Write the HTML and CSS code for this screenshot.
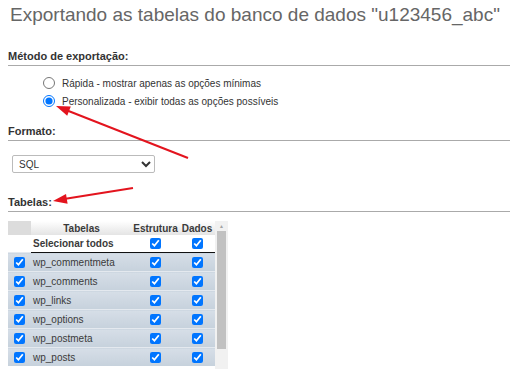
FILE: index.html
```html
<!DOCTYPE html>
<html lang="pt">

<head>
    <meta charset="UTF-8">
    <meta name="viewport" content="width=device-width, initial-scale=1.0">
    <title>Exportar</title>
    <link rel="stylesheet" href="styles.css">
</head>

<body>
    <h2 class="page-title">Exportando as tabelas do banco de dados "u123456_abc"</h2>

    <h3 class="section-title">Método de exportação:</h3>
    <ul class="radio-list">
        <li><input type="radio" name="method" id="quick"><label for="quick">Rápida - mostrar apenas as opções mínimas</label></li>
        <li><input type="radio" name="method" id="custom" checked><label for="custom">Personalizada - exibir todas as opções possíveis</label></li>
    </ul>

    <h3 class="section-title title-format">Formato:</h3>
    <select class="format-select">
        <option>SQL</option>
        <option>CSV</option>
        <option>JSON</option>
    </select>

    <h3 class="section-title title-tables">Tabelas:</h3>
    <div class="tables-box">
        <div class="tables-view">
            <table class="tables">
                <thead>
                    <tr>
                        <th class="col-check"></th>
                        <th class="col-name">Tabelas</th>
                        <th class="col-struct">Estrutura</th>
                        <th class="col-data">Dados</th>
                    </tr>
                </thead>
                <tbody>
                    <tr class="select-all">
                        <td class="col-check"></td>
                        <td>Selecionar todos</td>
                        <td class="center"><input type="checkbox" checked></td>
                        <td class="center"><input type="checkbox" checked></td>
                    </tr>
                    <tr class="marked">
                        <td class="col-check"><input type="checkbox" checked></td>
                        <td>wp_commentmeta</td>
                        <td class="center"><input type="checkbox" checked></td>
                        <td class="center"><input type="checkbox" checked></td>
                    </tr>
                    <tr class="marked">
                        <td class="col-check"><input type="checkbox" checked></td>
                        <td>wp_comments</td>
                        <td class="center"><input type="checkbox" checked></td>
                        <td class="center"><input type="checkbox" checked></td>
                    </tr>
                    <tr class="marked">
                        <td class="col-check"><input type="checkbox" checked></td>
                        <td>wp_links</td>
                        <td class="center"><input type="checkbox" checked></td>
                        <td class="center"><input type="checkbox" checked></td>
                    </tr>
                    <tr class="marked">
                        <td class="col-check"><input type="checkbox" checked></td>
                        <td>wp_options</td>
                        <td class="center"><input type="checkbox" checked></td>
                        <td class="center"><input type="checkbox" checked></td>
                    </tr>
                    <tr class="marked">
                        <td class="col-check"><input type="checkbox" checked></td>
                        <td>wp_postmeta</td>
                        <td class="center"><input type="checkbox" checked></td>
                        <td class="center"><input type="checkbox" checked></td>
                    </tr>
                    <tr class="marked">
                        <td class="col-check"><input type="checkbox" checked></td>
                        <td>wp_posts</td>
                        <td class="center"><input type="checkbox" checked></td>
                        <td class="center"><input type="checkbox" checked></td>
                    </tr>
                </tbody>
            </table>
        </div>
        <div class="scrollbar">
            <span class="scroll-up">&#9650;</span>
            <span class="scroll-thumb"></span>
        </div>
    </div>

    <svg class="arrows" width="516" height="379" viewBox="0 0 516 379">
        <line x1="188" y1="158" x2="66" y2="110" />
        <polygon points="56,106 70.8,106.5 67.2,115.8" />
        <line x1="133" y1="188" x2="64" y2="199" />
        <polygon points="53,201 67.6,203.7 66,193.9" />
    </svg>
</body>

</html>
```

FILE: styles.css
```css
body {
    font-family: "Liberation Sans", Arial, sans-serif;
    font-size: 10px;
    color: #333;
    background-color: #fff;
    margin: 0;
    padding: 0 6px 0 8px;
    position: relative;
}

.page-title {
    font-size: 19px;
    font-weight: normal;
    color: #666;
    margin: 0 0 0 2px;
    padding-top: 3px;
    line-height: 24px;
    white-space: nowrap;
}

.section-title {
    font-size: 11px;
    font-weight: bold;
    color: #333;
    margin: 23px 0 0;
    padding-bottom: 2px;
    line-height: 13px;
    border-bottom: 1px solid #aaa;
}

.radio-list {
    list-style: none;
    margin: 8px 0 0;
    padding: 0 0 0 35px;
}

.radio-list li {
    display: flex;
    align-items: center;
    height: 18px;
}

.radio-list input {
    width: 12px;
    height: 12px;
    margin: 0 7px 0 0;
}

.title-format {
    margin-top: 15px;
}

.format-select {
    display: block;
    margin: 14px 0 0 4px;
    width: 143px;
    height: 18px;
    font-family: "Liberation Sans", Arial, sans-serif;
    font-size: 10px;
    color: #333;
    border: 1px solid #bbb;
    border-radius: 2px;
    background-color: #fff;
    padding: 0 2px;
}

.title-tables {
    margin-top: 23px;
}

.tables-box {
    display: flex;
    margin-top: 9px;
    height: 148px;
}

.tables-view {
    width: 207px;
    overflow: hidden;
}

.tables {
    width: 207px;
    table-layout: fixed;
    border-collapse: collapse;
    font-size: 10px;
    color: #3a3a3a;
}

.tables th {
    font-weight: bold;
    height: 14px;
    padding: 0;
    background: linear-gradient(#fff, #e4e4e4);
    text-align: center;
    white-space: nowrap;
}

.tables th.col-check {
    background: #dcdcdc;
    width: 23px;
}

.tables th.col-name {
    width: 101px;
}

.tables th.col-struct {
    width: 47px;
}

.tables th.col-data {
    width: 36px;
}

.tables td {
    height: 18px;
    padding: 0 2px;
    white-space: nowrap;
    overflow: hidden;
}

.tables td.center,
.tables td.col-check {
    text-align: center;
}

.tables .select-all td {
    font-weight: bold;
    height: 17px;
    background-color: #fff;
}

.tables .select-all td:not(.col-check) {
    border-bottom: 1px solid #111;
}

.tables tr.marked td {
    background: linear-gradient(#d6dee7, #c6d1dc);
    border-top: 1px solid #e4e9ef;
}

.tables input[type="checkbox"] {
    width: 11px;
    height: 11px;
    margin: 0;
    vertical-align: middle;
}

.scrollbar {
    display: flex;
    flex-direction: column;
    width: 13px;
    background-color: #f1f1f1;
}

.scroll-up {
    height: 10px;
    font-size: 5px;
    line-height: 10px;
    color: #a3a3a3;
    text-align: center;
}

.scroll-thumb {
    height: 118px;
    margin: 0 2px;
    background-color: #c1c1c1;
}

.arrows {
    position: absolute;
    left: 0;
    top: 0;
    pointer-events: none;
}

.arrows line {
    stroke: #e3141e;
    stroke-width: 2;
}

.arrows polygon {
    fill: #e3141e;
}
```
